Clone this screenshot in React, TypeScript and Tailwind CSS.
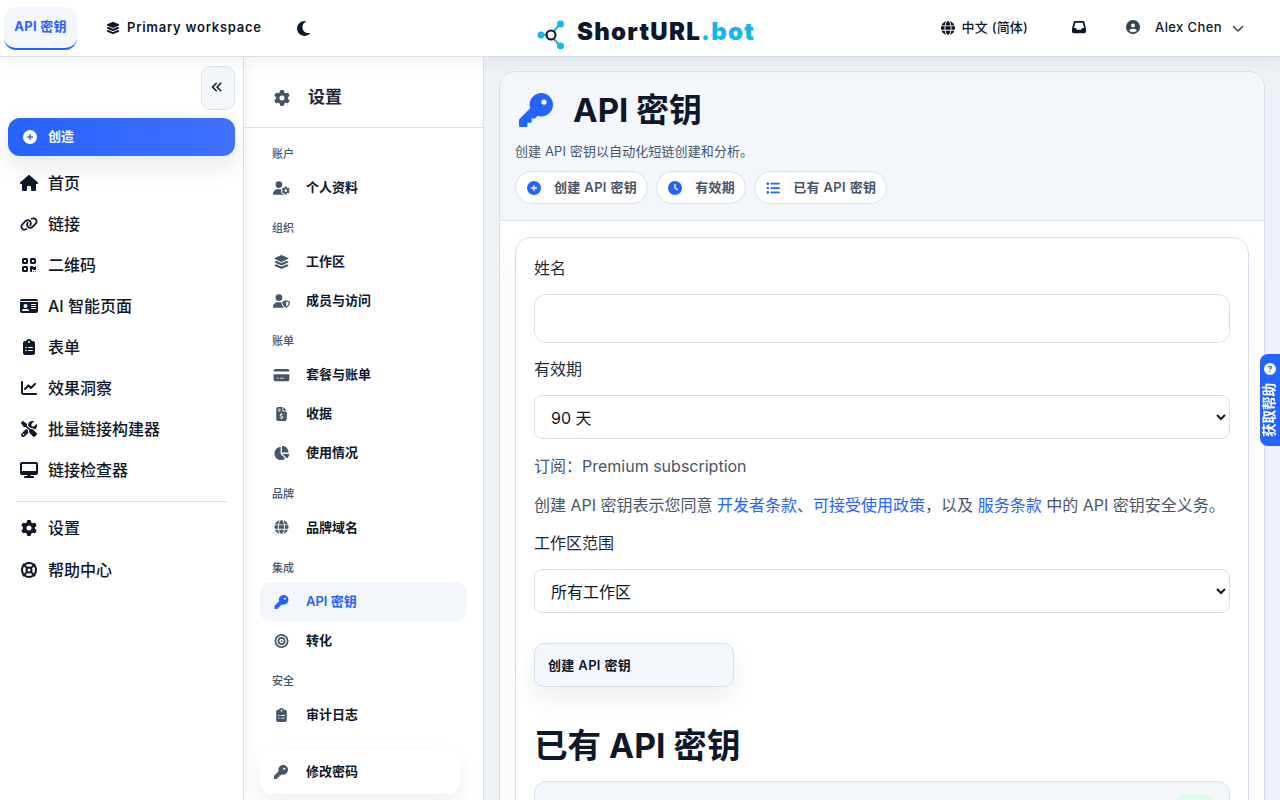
import {
  FaLayerGroup, FaMoon, FaGlobe, FaCircleUser, FaChevronDown, FaAnglesLeft, FaCirclePlus, FaHouse, FaLink, FaQrcode,
  FaIdCard, FaClipboardList, FaChartLine, FaScrewdriverWrench, FaDesktop, FaGear, FaLifeRing, FaUserGear, FaUserShield,
  FaCreditCard, FaFileInvoiceDollar, FaChartPie, FaKey, FaBullseye, FaClock, FaListUl, FaCircleQuestion, FaInbox,
} from 'react-icons/fa6'
import type { IconType } from 'react-icons'

const mainNav: [IconType, string][] = [
  [FaHouse, '首页'],
  [FaLink, '链接'],
  [FaQrcode, '二维码'],
  [FaIdCard, 'AI 智能页面'],
  [FaClipboardList, '表单'],
  [FaChartLine, '效果洞察'],
  [FaScrewdriverWrench, '批量链接构建器'],
  [FaDesktop, '链接检查器'],
]

const settingsNav: { title: string; items: [IconType, string][] }[] = [
  { title: '账户', items: [[FaUserGear, '个人资料']] },
  { title: '组织', items: [[FaLayerGroup, '工作区'], [FaUserShield, '成员与访问']] },
  { title: '账单', items: [[FaCreditCard, '套餐与账单'], [FaFileInvoiceDollar, '收据'], [FaChartPie, '使用情况']] },
  { title: '品牌', items: [[FaGlobe, '品牌域名']] },
  { title: '集成', items: [[FaKey, 'API 密钥'], [FaBullseye, '转化']] },
  { title: '安全', items: [[FaClipboardList, '审计日志']] },
]

function Logo() {
  return (
    <div className="ml-[11px] flex items-center gap-[11px] pt-2">
      <svg width="30" height="30" viewBox="0 0 30 30" className="mt-1">
        <path d="M8 16H12M18 12L24 5M18 20L24 27" stroke="#14b8e8" strokeWidth="2" />
        <circle cx="5" cy="16" r="3.5" fill="#14b8e8" />
        <circle cx="15" cy="16" r="4.5" fill="none" stroke="#0f172a" strokeWidth="2" />
        <circle cx="24.5" cy="5" r="3.5" fill="#14b8e8" />
        <circle cx="24.5" cy="27" r="3.5" fill="#14b8e8" />
      </svg>
      <span className="text-[24px] font-black leading-none tracking-[1.25px] text-[#0f172a]">
        ShortURL<span className="text-[#14b8e8]">.bot</span>
      </span>
    </div>
  )
}

function Header() {
  return (
    <header className="relative z-20 grid h-[57px] shrink-0 grid-cols-[1fr_auto_1fr] items-center border-b border-[#d9deec] bg-white shadow-[0_6px_18px_rgba(15,23,42,0.05)]">
      <div className="flex items-center pl-1">
        <div className="flex h-[43px] w-[73px] items-center justify-center rounded-xl border-b-2 border-[#2563ff] bg-[#f3f6fb] text-[13px] font-bold tracking-[0.3px] text-[#2563ff]">
          API 密钥
        </div>
        <div className="ml-[29px] flex items-center gap-[7px] text-[13px] font-semibold tracking-[0.75px] text-[#0f172a]">
          <FaLayerGroup className="h-[14px] w-[14px]" />
          Primary workspace
        </div>
        <FaMoon className="ml-[33px] h-[17px] w-[17px] text-[#0f172a]" />
      </div>
      <Logo />
      <div className="flex items-center justify-end pr-9 text-[13px] font-medium text-[#0f172a]">
        <FaGlobe className="h-[14px] w-[14px]" />
        <span className="ml-[7px] tracking-[0.2px]">中文 (简体)</span>
        <FaInbox className="mb-[2px] ml-11 h-[14px] w-[14px]" />
        <FaCircleUser className="mb-[2px] ml-10 h-[14px] w-[14px] text-[#334155]" />
        <span className="ml-[15px] tracking-[0.4px]">Alex Chen</span>
        <FaChevronDown className="ml-[10px] h-3 w-3 text-[#334155]" />
      </div>
    </header>
  )
}

function NavRow({ icon: Icon, label }: { icon: IconType; label: string }) {
  return (
    <div className="flex h-[41.09px] items-center gap-[10px] pl-3 text-[16px] font-medium text-[#0f172a]">
      <span className="flex w-[18px] justify-center"><Icon className="h-4 w-[18px]" /></span>
      {label}
    </div>
  )
}

function MainSidebar() {
  return (
    <aside className="relative z-10 flex w-[244px] shrink-0 flex-col border-r border-[#d9deec] bg-white px-2 pt-[9px] shadow-[4px_0_14px_rgba(15,23,42,0.04)]">
      <div className="flex justify-end">
        <button className="flex h-11 w-[34px] items-center justify-center rounded-[10px] border border-[#d9deec] bg-[#f3f6fb] text-[#0f172a]">
          <FaAnglesLeft className="mb-[2px] mr-[2px] h-3 w-3" />
        </button>
      </div>
      <button className="mt-2 flex h-[38px] w-[227px] items-center gap-[11px] rounded-xl bg-gradient-to-r from-[#2563ff] to-[#4070ff] pl-[15px] text-[13px] font-semibold text-white shadow-[0_10px_24px_rgba(15,23,42,0.1)]">
        <FaCirclePlus className="h-[14px] w-[14px]" />
        创造
      </button>
      <nav className="mt-[6px] flex flex-col">
        {mainNav.map(([Icon, label]) => (
          <NavRow key={label} icon={Icon} label={label} />
        ))}
      </nav>
      <div className="mx-2 mb-[6px] mt-[10.28px] border-t border-[#d9deec]" />
      <nav className="flex flex-col">
        <NavRow icon={FaGear} label="设置" />
        <NavRow icon={FaLifeRing} label="帮助中心" />
      </nav>
    </aside>
  )
}

function SettingsSidebar() {
  return (
    <aside className="flex w-[240px] shrink-0 flex-col overflow-hidden border-r border-[#d9deec] bg-white">
      <div className="flex h-[71px] shrink-0 items-center gap-[18px] border-b border-[#d9deec] pl-[30px] pt-3 text-[17px] font-semibold text-[#1e293b]">
        <FaGear className="h-4 w-4 text-[#475569]" />
        设置
      </div>
      <div className="flex flex-col px-4 pt-4">
        {settingsNav.map((section) => (
          <div key={section.title} className="mb-[11.25px]">
            <div className="flex h-5 items-center pl-3 text-[11px] font-medium text-[#475569]">{section.title}</div>
            <div className="mt-1 flex flex-col">
              {section.items.map(([Icon, label]) => {
                const active = label === 'API 密钥'
                return (
                  <div
                    key={label}
                    className={`flex h-[39px] items-center gap-[17px] rounded-[10px] pl-[13px] text-[13px] font-semibold ${
                      active ? 'bg-[#f3f6fb] text-[#2563ff]' : 'text-[#0f172a]'
                    }`}
                  >
                    <span className="flex w-4 justify-center">
                      <Icon className={`h-[14px] w-[17px] shrink-0 ${active ? 'text-[#2563ff]' : 'text-[#475569]'}`} />
                    </span>
                    {label}
                  </div>
                )
              })}
            </div>
          </div>
        ))}
        <div className="mt-1 flex h-11 w-[200px] shrink-0 items-center gap-[17px] rounded-xl bg-white pl-[13px] text-[13px] font-semibold text-[#0f172a] shadow-[0_8px_22px_rgba(15,23,42,0.07)]">
          <span className="flex w-4 justify-center"><FaKey className="h-[14px] w-[14px] text-[#475569]" /></span>
          修改密码
        </div>
      </div>
    </aside>
  )
}

function Pill({ icon: Icon, label }: { icon: IconType; label: string }) {
  return (
    <div className="flex h-[33px] items-center gap-[13px] rounded-full border border-[#d9deec] bg-white pl-[11px] pr-[10px] text-[13px] font-semibold tracking-[0.35px] text-[#475569]">
      <Icon className="h-[14px] w-[14px] text-[#2563ff]" />
      {label}
    </div>
  )
}

function ApiKeysPanel() {
  return (
    <section className="min-w-0 flex-1 overflow-hidden bg-[#eef1f6] pl-[15px] pr-[15px] pt-[14px]">
      <div className="rounded-t-2xl border border-[#d9deec] bg-white">
        <div className="rounded-t-2xl border-b border-[#d9deec] bg-[#f3f6fb] pb-4 pl-[15px] pr-4 pt-[19px]">
          <div className="flex h-[38px] items-center gap-5 pl-1">
            <FaKey className="h-[34px] w-[34px] text-[#2563ff]" />
            <h1 className="text-[33px] font-bold leading-none text-[#0f172a]">API 密钥</h1>
          </div>
          <p className="mt-3 text-[13px] leading-5 tracking-[0.1px] text-[#475569]">创建 API 密钥以自动化短链创建和分析。</p>
          <div className="mt-[10px] flex gap-2">
            <Pill icon={FaCirclePlus} label="创建 API 密钥" />
            <Pill icon={FaClock} label="有效期" />
            <Pill icon={FaListUl} label="已有 API 密钥" />
          </div>
        </div>
        <div className="px-[15px] pt-4">
          <div className="rounded-t-2xl border border-[#d9deec] px-[18px] pt-[18px] shadow-[0_10px_30px_rgba(15,23,42,0.04)]">
            <label className="block text-[16px] leading-6 text-[#1e293b]">姓名</label>
            <input className="mt-[14px] block h-[49px] w-full rounded-xl border border-[#d9deec] bg-white" />
            <label className="mt-[14px] block text-[16px] leading-6 text-[#1e293b]">有效期</label>
            <select defaultValue="90" className="mt-[14px] block h-[44px] w-full rounded-lg border border-[#d9deec] bg-white px-3 pt-[2px] text-[16px] text-[#0f172a]">
              <option value="90">90 天</option>
            </select>
            <p className="mt-[15px] text-[16px] leading-6 text-[#475569]">订阅：Premium subscription</p>
            <p className="mt-[15px] text-[16px] leading-6 text-[#475569]">
              创建 API 密钥表示您同意 <span className="text-[#2563ff]">开发者条款</span>、<span className="text-[#2563ff]">可接受使用政策</span>，以及 <span className="text-[#2563ff]">服务条款</span> 中的 API 密钥安全义务。
            </p>
            <label className="mt-[14px] block text-[16px] leading-6 text-[#1e293b]">工作区范围</label>
            <select defaultValue="all" className="mt-[14px] block h-[44px] w-full rounded-lg border border-[#d9deec] bg-white px-3 pt-[2px] text-[16px] text-[#0f172a]">
              <option value="all">所有工作区</option>
            </select>
            <button className="mt-[30px] flex h-11 w-[200px] items-center rounded-[10px] border border-[#d9deec] bg-[#f3f6fb] pl-[13px] pt-[2px] text-[13px] font-semibold tracking-[0.35px] text-[#0f172a] shadow-[0_10px_24px_rgba(15,23,42,0.08)]">
              创建 API 密钥
            </button>
            <h2 className="mt-[37px] text-[33.6px] font-bold leading-[44px] text-[#0f172a]">已有 API 密钥</h2>
            <div className="mt-[13px] flex h-16 items-start justify-end rounded-t-xl border border-[#d9deec] bg-[#f3f6fb] pr-[14px] pt-3">
              <span className="h-6 w-[41px] rounded-full bg-[#dcfce7]" />
            </div>
          </div>
        </div>
      </div>
    </section>
  )
}

export default function App() {
  return (
    <div className="flex h-screen flex-col overflow-hidden bg-white font-['Inter','Noto_Sans_CJK_SC',sans-serif]">
      <Header />
      <div className="flex min-h-0 flex-1">
        <MainSidebar />
        <SettingsSidebar />
        <ApiKeysPanel />
      </div>
      <div className="fixed right-0 top-[354px] z-30 flex h-[92px] w-5 flex-col items-center gap-2 rounded-l-lg bg-[#2563ff] pt-[9px] text-white">
        <FaCircleQuestion className="h-3 w-3" />
        <span className="rotate-180 text-[13.5px] font-semibold leading-none [text-orientation:sideways] [writing-mode:vertical-rl]">获取帮助</span>
      </div>
    </div>
  )
}
